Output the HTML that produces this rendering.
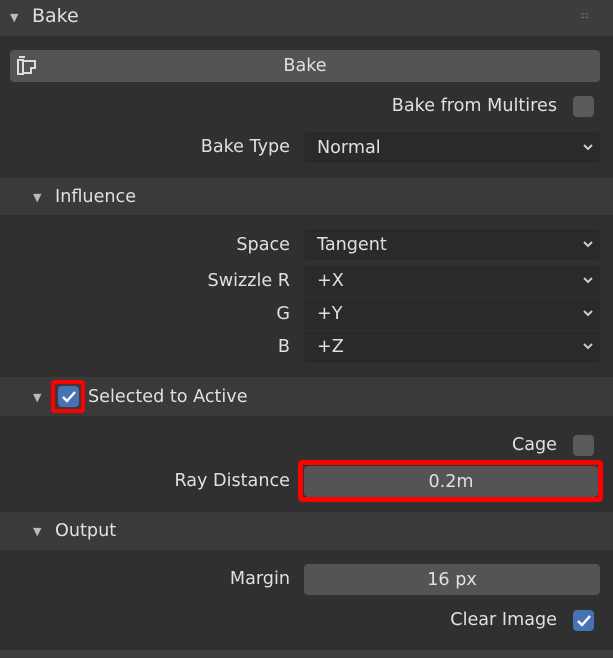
<html><head><style>
body{margin:0;width:613px;height:658px;background:#303030;font-family:"DejaVu Sans",sans-serif;font-size:17.6px;color:#e0e0e0;position:relative;overflow:hidden}
div{position:absolute;box-sizing:border-box}
.hd{left:0;width:613px;background:#3a3a3a}
.lbl{text-align:right;white-space:nowrap}
.dd{left:304px;width:296px;height:31px;background:#2a2a2a;border-radius:4px;padding:5px 0 0 13px}
.fld{left:304px;width:296px;height:31px;background:#545454;border-radius:4px;text-align:center;padding-top:5px}
.cb{width:21px;height:21px;border-radius:4px;background:#5a5a5a}
.cbk{background:#4772b3}
.tri{font-size:11px;color:#bbb}
.chev{position:absolute;right:5px;top:8px}
</style></head><body>
<div class="hd" style="top:0;height:36px;background:#3d3d3d"></div>
<div class="tri" style="left:10px;top:11px">▼</div>
<div style="left:32px;top:5px;font-size:19px">Bake</div>
<div style="left:580px;top:11px;color:#888;font-size:9px;letter-spacing:-1px">::::</div>

<div style="left:10px;top:50px;width:590px;height:32px;background:#545454;border-radius:4px;text-align:center;padding-top:6px">Bake</div>
<svg style="position:absolute;left:14px;top:53px" width="26" height="26" viewBox="0 0 26 26"><g fill="none" stroke="#ddd" stroke-width="2"><path d="M5 4h6M4 7h5v14H4zM9 8h12v7h-4v5H9"/></g></svg>

<div class="lbl" style="right:56px;top:96px">Bake from Multires</div>
<div class="cb" style="left:573px;top:96px"></div>

<div class="lbl" style="right:323px;top:137px">Bake Type</div>
<div class="dd" style="top:132px;padding-top:6px">Normal<svg class="chev" width="14" height="14"><path d="M3 5l4 4 4-4" stroke="#ccc" stroke-width="2" fill="none"/></svg></div>

<div class="hd" style="top:178px;height:37px"></div>
<div class="tri" style="left:33px;top:191px">▼</div>
<div style="left:55px;top:187px">Influence</div>

<div class="lbl" style="right:323px;top:235px">Space</div>
<div class="dd" style="top:229px;padding-top:6px">Tangent<svg class="chev" width="14" height="14"><path d="M3 5l4 4 4-4" stroke="#ccc" stroke-width="2" fill="none"/></svg></div>
<div class="lbl" style="right:323px;top:271px">Swizzle R</div>
<div class="dd" style="top:265px;height:32px;border-radius:4px 4px 0 0;padding-top:6px">+X<svg class="chev" width="14" height="14"><path d="M3 5l4 4 4-4" stroke="#ccc" stroke-width="2" fill="none"/></svg></div>
<div class="lbl" style="right:323px;top:304px">G</div>
<div class="dd" style="top:298px;height:32px;border-radius:0;padding-top:6px">+Y<svg class="chev" width="14" height="14"><path d="M3 5l4 4 4-4" stroke="#ccc" stroke-width="2" fill="none"/></svg></div>
<div class="lbl" style="right:323px;top:337px">B</div>
<div class="dd" style="top:331px;height:32px;border-radius:0 0 4px 4px;padding-top:6px">+Z<svg class="chev" width="14" height="14"><path d="M3 5l4 4 4-4" stroke="#ccc" stroke-width="2" fill="none"/></svg></div>

<div class="hd" style="top:377px;height:39px"></div>
<div class="tri" style="left:33px;top:391px">▼</div>
<div style="left:51px;top:380px;width:34px;height:33px;border:4px solid #f00;border-radius:4px"></div>
<div class="cb cbk" style="left:58px;top:386px"><svg width="21" height="21"><path d="M5 11l4 4 8-9" stroke="#fff" stroke-width="2.4" fill="none"/></svg></div>
<div style="left:88px;top:387px">Selected to Active</div>

<div class="lbl" style="right:56px;top:435px">Cage</div>
<div class="cb" style="left:573px;top:435px"></div>
<div class="lbl" style="right:323px;top:471px">Ray Distance</div>
<div style="left:298px;top:460px;width:305px;height:42px;border:5px solid #f00;border-radius:4px"></div>
<div class="fld" style="top:466px;width:294px;padding-top:6px">0.2m</div>

<div class="hd" style="top:512px;height:38px"></div>
<div class="tri" style="left:33px;top:525px">▼</div>
<div style="left:55px;top:521px">Output</div>

<div class="lbl" style="right:323px;top:569px">Margin</div>
<div class="fld" style="top:564px;padding-top:6px">16 px</div>
<div class="lbl" style="right:56px;top:610px">Clear Image</div>
<div class="cb cbk" style="left:573px;top:610px"><svg width="21" height="21"><path d="M5 11l4 4 8-9" stroke="#fff" stroke-width="2.4" fill="none"/></svg></div>

<div class="hd" style="top:650px;height:8px;background:#3d3d3d"></div>
</body></html>
